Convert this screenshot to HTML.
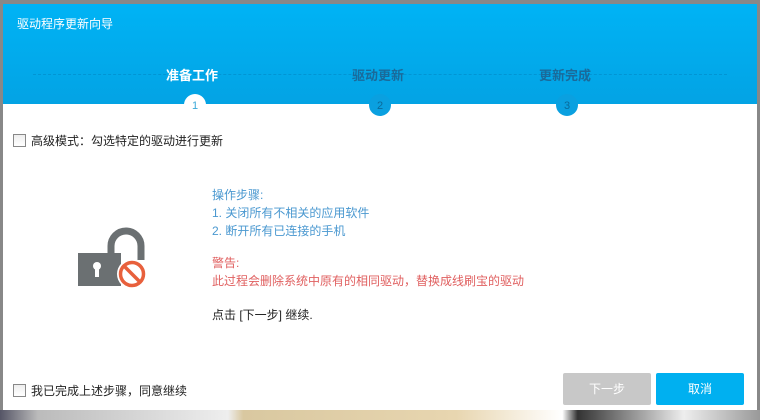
<!DOCTYPE html>
<html><head><meta charset="utf-8"><style>
body{margin:0;width:760px;height:420px;overflow:hidden;position:relative;background:#888;font-family:"Liberation Sans","Noto Sans CJK SC",sans-serif;}
.win{position:absolute;left:3px;top:4px;width:754px;height:406px;background:#fff;}
.hdr{position:absolute;left:0;top:0;width:754px;height:100px;background:linear-gradient(#00b3f5,#03a3e4);}
.title{position:absolute;left:14px;top:11px;color:#fff;font-size:12px;}
.dash{position:absolute;left:30px;right:30px;top:70px;border-top:1px dashed rgba(0,90,150,.25);}
.step{position:absolute;top:61px;font-size:13px;font-weight:bold;color:#1a6a9a;}
.c{position:absolute;top:90px;width:22px;height:22px;border-radius:50%;background:#0aa0e0;color:#0a6a9a;font-size:11px;text-align:center;line-height:24px;}
.cb{position:absolute;width:11px;height:11px;border:1px solid #888;background:linear-gradient(#eee,#fff);}
.t{position:absolute;font-size:12px;color:#222;}
.b{position:absolute;top:369px;height:32px;width:88px;color:#fff;font-size:12px;text-align:center;line-height:32px;border-radius:2px;}
.bot{position:absolute;left:0;top:410px;width:760px;height:10px;background:linear-gradient(90deg,#556 0,#bbb 5%,#eee 30%,#d9c8a0 32%,#e8d6b0 60%,#fff 74%,#333 76%,#eee 90%,#999 100%);}
</style></head><body>
<div class="bot"></div>
<div class="win">
<div class="hdr">
<div class="title">驱动程序更新向导</div>
<div class="dash"></div>
<div class="step" style="left:163px;color:#fff">准备工作</div>
<div class="step" style="left:349px">驱动更新</div>
<div class="step" style="left:536px">更新完成</div>
</div>
<div class="c" style="left:181px;background:#fff;color:#3aa8d8">1</div>
<div class="c" style="left:366px">2</div>
<div class="c" style="left:553px">3</div>
<div class="cb" style="left:10px;top:130px"></div>
<div class="t" style="left:28px;top:128px">高级模式：勾选特定的驱动进行更新</div>
<svg style="position:absolute;left:70px;top:222px" width="80" height="70">
<path d="M38 30 V20 a15 15 0 0 1 30 0 V34" fill="none" stroke="#6b7072" stroke-width="7"/>
<rect x="5" y="27" width="43" height="33" fill="#6b7072"/>
<circle cx="24" cy="40" r="4" fill="#fff"/><rect x="22" y="40" width="4" height="11" fill="#fff"/>
<circle cx="59" cy="48" r="15" fill="#fff"/>
<circle cx="59" cy="48" r="11.5" fill="none" stroke="#e8603c" stroke-width="3.5"/>
<line x1="51" y1="40" x2="67" y2="56" stroke="#e8603c" stroke-width="3.5"/>
</svg>
<div class="t" style="left:209px;top:182px;color:#4a98d0;line-height:18px">操作步骤:<br>1. 关闭所有不相关的应用软件<br>2. 断开所有已连接的手机</div>
<div class="t" style="left:209px;top:250px;color:#e06060;line-height:18px">警告:<br>此过程会删除系统中原有的相同驱动，替换成线刷宝的驱动</div>
<div class="t" style="left:209px;top:302px">点击 [下一步] 继续.</div>
<div class="cb" style="left:10px;top:380px"></div>
<div class="t" style="left:28px;top:378px">我已完成上述步骤，同意继续</div>
<div class="b" style="left:560px;background:#c8c8c8">下一步</div>
<div class="b" style="left:653px;background:#00b0f0">取消</div>
</div>
</body></html>
